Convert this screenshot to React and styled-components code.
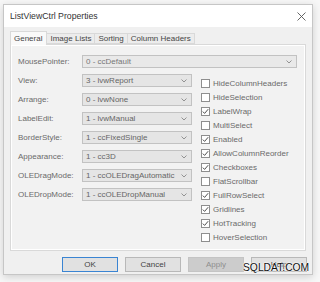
import React from 'react';
import styled, { createGlobalStyle } from 'styled-components';

const Global = createGlobalStyle`
  html, body { margin: 0; padding: 0; background: #f7f7f7; }
  body {
    font-family: "Liberation Sans", Arial, sans-serif;
    width: 320px; height: 282px; overflow: hidden;
  }
`;

const Page = styled.div`
  position: relative;
  width: 320px;
  height: 282px;
  box-sizing: border-box;
  padding: 4px 7px 0 3px;
`;

const Window = styled.div`
  width: 310px;
  height: 271px;
  box-sizing: border-box;
  border: 1px solid #c6c6c6;
  background: #f0f0f0;
  box-shadow: 0 2px 8px rgba(0, 0, 0, 0.16);
  display: flex;
  flex-direction: column;
`;

const TitleBar = styled.div`
  height: 22px;
  flex: none;
  background: #ffffff;
  display: flex;
  align-items: center;
  justify-content: space-between;
  padding: 0 6px 0 6px;
  font-size: 8.7px;
  color: #333;
`;

const Body = styled.div`
  flex: 1;
  display: flex;
  flex-direction: column;
  padding: 4px 6px 2px 6px;
`;

const Tabs = styled.div`
  display: flex;
  align-items: flex-end;
  height: 13px;
  position: relative;
  z-index: 1;
`;

const Tab = styled.div`
  box-sizing: border-box;
  height: ${p => (p.$active ? '14px' : '11px')};
  margin-bottom: ${p => (p.$active ? '-1px' : '0')};
  display: flex;
  align-items: center;
  font-size: 8px;
  color: #444;
  background: ${p => (p.$active ? '#f9f9f9' : '#ececec')};
  border: 1px solid #d9d9d9;
  border-bottom: ${p => (p.$active ? 'none' : '1px solid #d9d9d9')};
  border-left: ${p => (p.$first || p.$active ? '1px solid #d9d9d9' : 'none')};
  padding: 0 ${p => (p.$active ? '4px' : '3px')} 0 3px;
`;

const Panel = styled.div`
  height: 207px;
  box-sizing: border-box;
  border: 1px solid #d9d9d9;
  box-shadow: inset 1px 1px 0 #ffffff, inset -1px -1px 0 #ffffff;
  background: #f2f2f2;
  padding: 10px 8px 0 7px;
  display: flex;
  flex-direction: column;
`;

const FieldRow = styled.div`
  display: flex;
  align-items: center;
  height: 13px;
`;

const Label = styled.div`
  width: 64px;
  flex: none;
  font-size: 8px;
  color: #6a6a6a;
  white-space: nowrap;
`;

const Combo = styled.div`
  box-sizing: border-box;
  height: 13px;
  width: ${p => p.$width || 'auto'};
  flex: ${p => (p.$width ? 'none' : '1')};
  border: 1px solid #c2c2c2;
  background: ${p => (p.$disabled ? '#e9e9e9' : '#e5e5e5')};
  display: flex;
  align-items: center;
  justify-content: space-between;
  padding: 0 4px 0 3px;
  font-size: 8px;
  color: ${p => (p.$disabled ? '#777' : '#666')};
  white-space: nowrap;
`;

const Columns = styled.div`
  display: flex;
  margin-top: 6px;
`;

const LeftCol = styled.div`
  width: 174px;
  flex: none;
  display: flex;
  flex-direction: column;
  gap: 6px;
`;

const RightCol = styled.div`
  margin-left: 9px;
  margin-top: 2px;
  display: flex;
  flex-direction: column;
`;

const CheckRow = styled.div`
  height: 14px;
  display: flex;
  align-items: center;
  gap: 3px;
  font-size: 8px;
  color: #6a6a6a;
  white-space: nowrap;
`;

const Box = styled.div`
  width: 9px;
  height: 9px;
  box-sizing: border-box;
  border: 1px solid #8e8e8e;
  background: #fff;
  display: flex;
  align-items: center;
  justify-content: center;
`;

const Buttons = styled.div`
  margin-top: 6px;
  margin-right: -1px;
  display: flex;
  justify-content: flex-end;
  gap: 7px;
`;

const Button = styled.div`
  width: 56px;
  height: 15px;
  box-sizing: border-box;
  display: flex;
  align-items: center;
  justify-content: center;
  font-size: 8px;
  background: ${p => (p.$disabled ? '#cccccc' : '#e1e1e1')};
  border: 1px solid ${p => (p.$default ? '#3a84d2' : p.$disabled ? '#c4c4c4' : '#b8b8b8')};
  color: ${p => (p.$disabled ? '#8e8e8e' : '#444')};
`;

const Watermark = styled.div`
  position: absolute;
  left: 243px;
  top: 262px;
  font-size: 10.3px;
  color: #111;
  text-shadow: 0 0 2px #fff, 0 0 2px #fff, 0 0 1px #fff;
`;

const Chevron = () => (
  <svg width="6" height="4" viewBox="0 0 6 4">
    <path d="M0.5 0.5 L3 3 L5.5 0.5" fill="none" stroke="#888" strokeWidth="0.9" />
  </svg>
);

const Check = () => (
  <svg width="7" height="7" viewBox="0 0 7 7">
    <path d="M0.8 3.6 L2.6 5.4 L6.2 1.2" fill="none" stroke="#3a3a3a" strokeWidth="0.9" />
  </svg>
);

const CloseIcon = () => (
  <svg width="9" height="9" viewBox="0 0 9 9">
    <path d="M0.5 0.5 L8.5 8.5 M8.5 0.5 L0.5 8.5" stroke="#555" strokeWidth="0.9" />
  </svg>
);

const fields = [
  ['View:', '3 - lvwReport'],
  ['Arrange:', '0 - lvwNone'],
  ['LabelEdit:', '1 - lvwManual'],
  ['BorderStyle:', '1 - ccFixedSingle'],
  ['Appearance:', '1 - cc3D'],
  ['OLEDragMode:', '1 - ccOLEDragAutomatic'],
  ['OLEDropMode:', '1 - ccOLEDropManual'],
];

const checks = [
  ['HideColumnHeaders', false],
  ['HideSelection', false],
  ['LabelWrap', true],
  ['MultiSelect', false],
  ['Enabled', true],
  ['AllowColumnReorder', true],
  ['Checkboxes', true],
  ['FlatScrollbar', false],
  ['FullRowSelect', true],
  ['Gridlines', true],
  ['HotTracking', true],
  ['HoverSelection', false],
];

export default function App() {
  return (
    <Page>
      <Global />
      <Window>
        <TitleBar>
          <span>ListViewCtrl Properties</span>
          <CloseIcon />
        </TitleBar>
        <Body>
          <Tabs>
            <Tab $active $first>General</Tab>
            <Tab>Image Lists</Tab>
            <Tab>Sorting</Tab>
            <Tab>Column Headers</Tab>
          </Tabs>
          <Panel>
            <FieldRow>
              <Label>MousePointer:</Label>
              <Combo $disabled>
                <span>0 - ccDefault</span>
                <Chevron />
              </Combo>
            </FieldRow>
            <Columns>
              <LeftCol>
                {fields.map(([l, v]) => (
                  <FieldRow key={l}>
                    <Label>{l}</Label>
                    <Combo $width="110px">
                      <span>{v}</span>
                      <Chevron />
                    </Combo>
                  </FieldRow>
                ))}
              </LeftCol>
              <RightCol>
                {checks.map(([l, c]) => (
                  <CheckRow key={l}>
                    <Box>{c && <Check />}</Box>
                    <span>{l}</span>
                  </CheckRow>
                ))}
              </RightCol>
            </Columns>
          </Panel>
          <Buttons>
            <Button $default>OK</Button>
            <Button>Cancel</Button>
            <Button $disabled>Apply</Button>
            <Button>Help</Button>
          </Buttons>
        </Body>
      </Window>
      <Watermark>SQLDAT.COM</Watermark>
    </Page>
  );
}
